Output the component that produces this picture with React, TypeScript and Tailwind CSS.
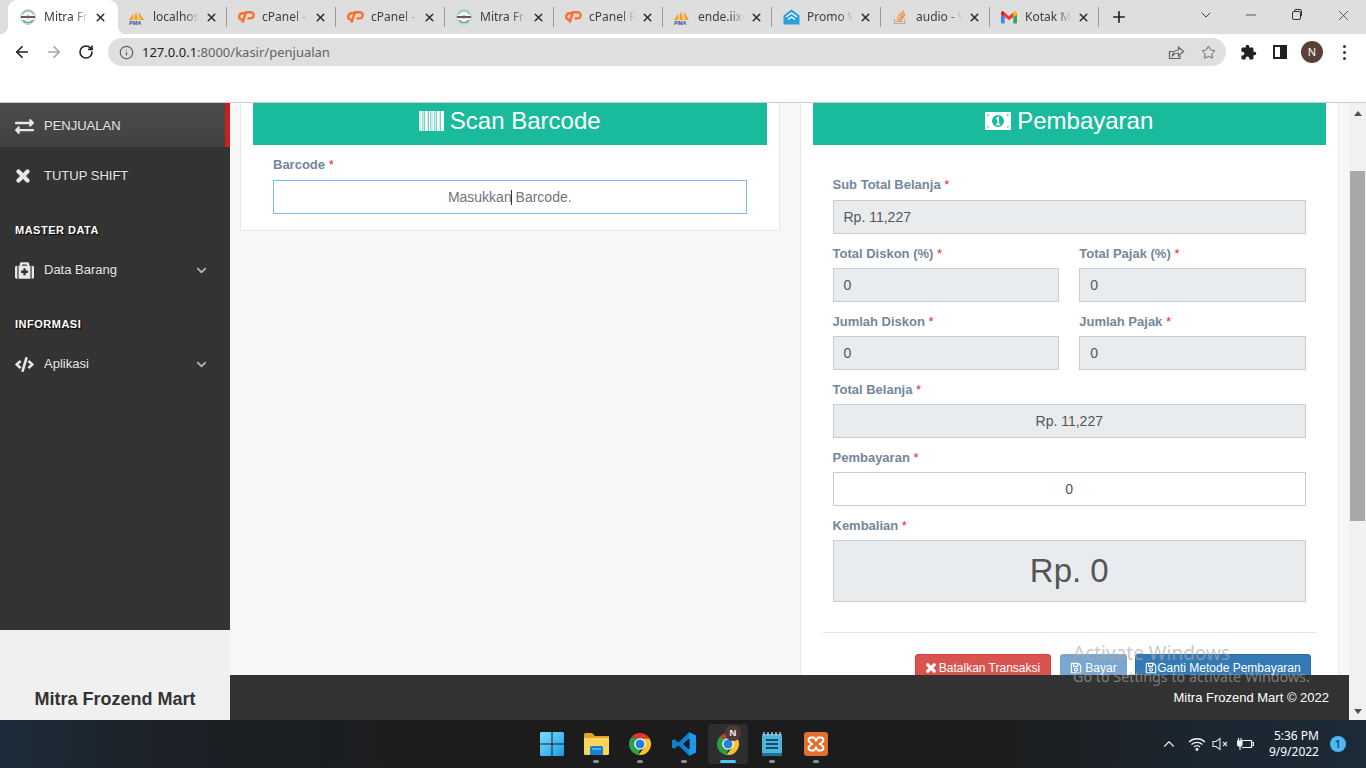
import React from "react";
import { ArrowLeft, ArrowRight, RotateCw, Info, Star, X, Plus, ChevronDown, ChevronUp, Minus } from "lucide-react";
import { FaExchangeAlt, FaMedkit, FaCode, FaChevronDown, FaRegSave } from "react-icons/fa";

const Mitra = () => (
  <svg width="16" height="16" viewBox="0 0 16 16">
    <circle cx="8" cy="8" r="7.5" fill="#f4f7f4" stroke="#b9d3c3" />
    <path d="M2.5 5.5A6 6 0 0 1 13.5 5.5" fill="none" stroke="#7fb9a0" strokeWidth="1.2" />
    <path d="M3 11A6 6 0 0 0 13 11" fill="none" stroke="#5fa98a" strokeWidth="1.4" />
    <rect x="1" y="7" width="14" height="2" fill="#5b5f60" />
    <circle cx="8" cy="8" r="1.4" fill="#b8403d" />
  </svg>
);
const Pma = () => (
  <svg width="18" height="16" viewBox="0 0 18 16">
    <path d="M1 11 5 5l1 6zM6 11l2-9 2 9zM10 11l1-8 5 8z" fill="#f29b2b" />
    <path d="M4 11l2-7 1 7zM9 11l2-7 2 7z" fill="#f6c46c" />
    <text x="1" y="15.5" fontSize="5.5" fontWeight="700" fontStyle="italic" fill="#3d4a86" fontFamily="Liberation Sans, sans-serif">PMA</text>
  </svg>
);
const CP = () => (
  <svg width="17" height="12" viewBox="0 0 17 12">
    <path d="M7 2.200H4.500A3.200 3.200 0 0 0 1.300 5.400 2.600 2.600 0 0 0 3.900 8.600H5.500" fill="none" stroke="#f9702c" strokeWidth="2.400" />
    <path d="M4.500 11.600 7.900 1.300H13A2.700 2.700 0 0 1 15.600 4.500 3.200 3.200 0 0 1 12.400 7.400H9.500" fill="none" stroke="#f9702c" strokeWidth="2.400" />
  </svg>
);
const Promo = () => (
  <svg width="17" height="16" viewBox="0 0 17 16">
    <path d="M8.5 0.5 16.5 6.5V15.5H0.5V6.5Z" fill="#2a9fdc" />
    <path d="M3 8 8.5 4 14 8M5 10.5 8.5 8 12 10.5" fill="none" stroke="#fff" strokeWidth="1.4" />
  </svg>
);
const Stack = () => (
  <svg width="16" height="16" viewBox="0 0 16 16">
    <path d="M2.5 10v4.5h10V10" fill="none" stroke="#b3aea5" strokeWidth="1.2" />
    <path d="M4.5 12.5h6M4.6 10.4l6 .6M5.1 8l5.8 1.6M6.3 5.6l5.2 3M8.3 3.4l3.9 4.4M10.8 1.5l2 5.4" stroke="#f0882d" strokeWidth="1.2" fill="none" />
  </svg>
);
const Gmail = () => (
  <svg width="16" height="13" viewBox="0 0 16 13">
    <path d="M1 12.5h2.7V6L0 3.2v8.2c0 .6.4 1.1 1 1.1z" fill="#4285f4" />
    <path d="M12.3 12.5H15c.6 0 1-.5 1-1.1V3.2L12.3 6z" fill="#34a853" />
    <path d="M12.3 1.6V6L16 3.2V1.8C16 .5 14.500 -.2 13.500 .6z" fill="#fbbc04" />
    <path d="M3.700 6V1.600L8 4.900 12.300 1.600V6L8 9.200z" fill="#ea4335" />
    <path d="M0 1.800v1.400L3.700 6V1.600L2.500 .6C1.500 -.2 0 .5 0 1.800z" fill="#c5221f" />
  </svg>
);
const Cross = ({ s = 14, w = 4.5 }: { s?: number; w?: number }) => (
  <svg width={s} height={s} viewBox="0 0 14 14" className="shrink-0">
    <path d="M2.500 2.500 11.500 11.500M11.500 2.500 2.500 11.500" stroke="currentColor" strokeWidth={w} strokeLinecap="round" />
  </svg>
);

const tabs: { t: string; i: React.ReactNode; w?: number }[] = [
  { t: "localhost", i: <Pma /> },
  { t: "cPanel - Tools", i: <CP /> },
  { t: "cPanel - Tools", i: <CP /> },
  { t: "Mitra Frozend", i: <Mitra /> },
  { t: "cPanel File", i: <CP /> },
  { t: "ende.iixcp", i: <Pma /> },
  { t: "Promo Web", i: <Promo /> },
  { t: "audio - Web", i: <Stack /> },
  { t: "Kotak Masuk", i: <Gmail /> },
];

function Tab({ t, i }: { t: string; i: React.ReactNode }) {
  return (
    <div className="relative flex h-[34px] w-[109px] shrink-0 items-center pl-[10px]">
      <div className="flex w-[18px] shrink-0 justify-center">{i}</div>
      <div className="ml-[7px] w-[46px] overflow-hidden whitespace-nowrap text-[12px] text-[#3c4043] [mask-image:linear-gradient(90deg,#000_70%,transparent)]">{t}</div>
      <X className="ml-[6px] shrink-0 text-[#333]" size={13} strokeWidth={3} />
      <div className="ml-auto mr-0 h-[20px] w-px bg-[#9a9a9a]" />
    </div>
  );
}

function TopBar() {
  return (
    <div className="shrink-0 font-['Noto_Sans',sans-serif]">
      <div className="flex h-[34px] items-center bg-[#dedede] pl-[8px]">
        <div className="relative flex h-[34px] w-[110px] shrink-0 items-center rounded-t-[9px] bg-white pl-[11px]">
          <div className="absolute -left-2 bottom-0 h-2 w-2 bg-[radial-gradient(circle_at_0_0,transparent_8px,white_8px)]" />
          <div className="absolute -right-2 bottom-0 h-2 w-2 bg-[radial-gradient(circle_at_100%_0,transparent_8px,white_8px)]" />
          <div className="flex w-[18px] shrink-0 justify-center"><Mitra /></div>
          <div className="ml-[7px] w-[44px] overflow-hidden whitespace-nowrap text-[12px] text-[#3c4043] [mask-image:linear-gradient(90deg,#000_70%,transparent)]">Mitra Frozend</div>
          <X className="ml-[6px] shrink-0 text-[#333]" size={13} strokeWidth={3} />
        </div>
        {tabs.map((x, k) => <Tab key={k} t={x.t} i={x.i} />)}
        <Plus className="ml-[11px] shrink-0 text-[#202124]" size={18} strokeWidth={2.2} />
        <ChevronDown className="ml-[70px] -mt-[4px] shrink-0 text-[#333]" size={16} strokeWidth={1.4} />
        <Minus className="ml-[29px] -mt-[4px] shrink-0 text-[#333]" size={16} strokeWidth={1.2} />
        <svg className="ml-[30px] -mt-[4px] shrink-0" width="16" height="16" viewBox="0 0 16 16" fill="none" stroke="#333">
          <rect x="3.500" y="4.500" width="8" height="8" rx="1.500" />
          <path d="M5.500 4.500V4a1.500 1.500 0 0 1 1.500-1.500h4A1.500 1.500 0 0 1 12.500 4v4A1.500 1.500 0 0 1 11.500 9.500" />
        </svg>
        <X className="ml-[30px] -mt-[4px] shrink-0 text-[#333]" size={17} strokeWidth={1.1} />
      </div>
      <div className="flex h-[69px] items-start border-b border-[#cccccc] bg-white pt-[4px]">
        <div className="ml-[6px] flex">
          <div className="flex h-[28px] w-8 items-center justify-center"><ArrowLeft size={18} strokeWidth={2.2} className="text-[#202124]" /></div>
          <div className="flex h-[28px] w-8 items-center justify-center"><ArrowRight size={18} strokeWidth={2.2} className="text-[#a5a5a5]" /></div>
          <div className="flex h-[28px] w-8 items-center justify-center"><RotateCw size={16} strokeWidth={2.4} className="text-[#202124]" /></div>
        </div>
        <div className="ml-[6px] flex h-[28px] w-[1118px] items-center rounded-full bg-[#dfdfdf] pl-[11px] pr-[10px]">
          <Info size={15} strokeWidth={2} className="text-[#5f6368]" />
          <div className="ml-[8px] mt-[1px] whitespace-nowrap text-[13px] text-[#5f6368]"><span className="text-[#202124]">127.0.0.1</span>:8000/kasir/penjualan</div>
          <svg className="ml-auto" width="18" height="18" viewBox="0 0 18 18" fill="none" stroke="#5f6368" strokeWidth="1.200">
            <path d="M6 8.500H2.500V15.500H13V13" />
            <path d="M5.500 12.500C6 9 8.500 7 11.500 7V4l5 4.500-5 4.500V10C9 10 7 10.800 5.500 12.500Z" />
          </svg>
          <Star className="ml-[16px]" size={15} strokeWidth={1.600} color="#5f6368" />
        </div>
        <div className="ml-[6px] flex">
          <div className="flex h-[28px] w-8 items-center justify-center">
            <svg width="17" height="17" viewBox="0 0 24 24" fill="#202124">
              <path d="M20.500 11H19V7a2 2 0 0 0-2-2h-4V3.500a2.500 2.500 0 0 0-5 0V5H4a2 2 0 0 0-2 2v3.800h1.500a2.700 2.700 0 0 1 0 5.400H2V20a2 2 0 0 0 2 2h3.800v-1.500a2.700 2.700 0 0 1 5.400 0V22H17a2 2 0 0 0 2-2v-4h1.500a2.500 2.500 0 0 0 0-5z" />
            </svg>
          </div>
          <div className="flex h-[28px] w-8 items-center justify-center">
            <div className="flex h-[14px] w-[14px] justify-end border-2 border-[#202124] bg-white"><div className="h-full w-[5px] bg-[#202124]" /></div>
          </div>
          <div className="flex h-[28px] w-8 items-center justify-center">
            <div className="flex h-[22px] w-[22px] items-center justify-center rounded-full bg-[#5d4037] text-[11px] text-white">N</div>
          </div>
          <div className="flex h-[28px] w-8 flex-col items-center justify-center gap-[3px]">
            <div className="h-[3px] w-[3px] rounded-full bg-[#333]" />
            <div className="h-[3px] w-[3px] rounded-full bg-[#333]" />
            <div className="h-[3px] w-[3px] rounded-full bg-[#333]" />
          </div>
        </div>
      </div>
    </div>
  );
}

function Sidebar() {
  const item = "flex items-center text-[13px] text-[#e7e7e7] [text-shadow:rgba(0,0,0,0.25)_0_-1px_0]";
  const head = "flex items-center pl-[15px] text-[11px] font-bold tracking-[0.5px] text-white [text-shadow:1px_1px_1px_#000]";
  return (
    <div className="flex w-[230px] shrink-0 flex-col">
      <div className="h-[527px] bg-[#333333]">
        <div className={`${item} h-[44px] border-r-[5px] border-[#c9201f] bg-[linear-gradient(#4c4c4c,#414141)] pl-[15px] pt-[2px]`}>
          <FaExchangeAlt size={19} className="w-[19px]" />
          <span className="ml-[10px]">PENJUALAN</span>
        </div>
        <div className={`${item} h-[56px] pl-[15px] pt-[2px]`}>
          <div className="flex w-[15px] justify-center"><Cross s={14} w={4.2} /></div>
          <span className="ml-[14px]">TUTUP SHIFT</span>
        </div>
        <div className={`${head} mt-[12px] h-[30px]`}>MASTER DATA</div>
        <div className={`${item} mt-[5px] h-[40px] pl-[15px] pr-[23px]`}>
          <FaMedkit size={19} className="w-[19px]" />
          <span className="ml-[10px]">Data Barang</span>
          <FaChevronDown size={11} className="ml-auto text-[#b5b5b5]" />
        </div>
        <div className={`${head} mt-[19px] h-[30px]`}>INFORMASI</div>
        <div className={`${item} mt-[6px] h-[38px] pl-[15px] pr-[23px]`}>
          <FaCode size={19} className="w-[19px]" />
          <span className="ml-[10px]">Aplikasi</span>
          <FaChevronDown size={11} className="ml-auto text-[#b5b5b5]" />
        </div>
      </div>
      <div className="flex h-[90px] items-end justify-center bg-[#f0f0f0] pb-[10px] text-[18px] font-bold text-[#333]"><span className="relative top-[3px]">Mitra Frozend Mart</span></div>
    </div>
  );
}

const Req = () => <span className="font-normal text-[#f0233f]"> *</span>;

function Label({ t }: { t: string }) {
  return <div className="pb-[4px] pt-[10px] text-[13px] font-bold leading-5 text-[#73879c]">{t}<Req /></div>;
}

function Field({ v, center, white, big, h = "h-[34px]" }: { v: string; center?: boolean; white?: boolean; big?: boolean; h?: string }) {
  return (
    <div className={`${h} flex items-center border border-[#cccccc] px-[10px] text-[#555555] ${big ? "text-[33px]" : "text-[14px]"} ${center ? "justify-center" : ""} ${white ? "bg-white" : "bg-[#e9ecef]"}`}>{v}</div>
  );
}

const Barcode = () => (
  <svg width="25" height="20" viewBox="0 0 25 20">
    {[0, 2, 4, 6, 8, 10, 12, 14, 16, 18, 20, 22].map((x, k) => (
      <rect key={k} x={x} y="0" width={k % 3 === 0 ? 2 : 1.500} height="20" fill={k % 2 ? "#ffffff" : "#cfeee5"} />
    ))}
    <rect x="23" width="2" height="20" fill="#fff" />
  </svg>
);
const Money = () => (
  <svg width="26" height="20" viewBox="0 0 26 20">
    <path fillRule="evenodd" d="M0 1h26v18H0zM2.500 3.500v1.800a2.500 2.500 0 0 0 1.800-1.800zM21.700 3.500a2.500 2.500 0 0 0 1.800 1.800V3.500zM2.500 14.700v1.800h1.800a2.500 2.500 0 0 0-1.800-1.800zM23.500 14.700a2.500 2.500 0 0 0-1.800 1.800h1.800zM13 4a6 6 0 1 0 0 12 6 6 0 0 0 0-12z" fill="#fff" />
    <path d="M11.200 8l2-1.300V13.500M11 13.500h4.200" stroke="#fff" strokeWidth="1.500" fill="none" />
  </svg>
);

function Main() {
  return (
    <div className="flex min-w-0 flex-1 flex-col">
      <div className="flex h-[572px] gap-5 overflow-hidden bg-[#f7f7f7] px-[10px]">
        <div className="h-[128px] flex-1 border-x border-b border-[#e6e9ed] bg-white px-[12px]">
          <div className="flex h-[42px] items-center justify-center gap-[6px] bg-[#1abb9c] pb-[6px] text-[24px] text-white"><Barcode />Scan Barcode</div>
          <div className="px-[20px]">
            <div className="pb-[5px] pt-[10px] text-[13px] font-bold leading-5 text-[#73879c]">Barcode<Req /></div>
            <div className="relative flex h-[34px] items-center justify-center border border-[#7db8f7] text-[14px] text-[#73737f]">
              Masukkan Barcode.
              <div className="absolute left-[237px] top-[9px] h-[15px] w-px bg-[#333]" />
            </div>
          </div>
        </div>
        <div className="flex-1 border-x border-[#e6e9ed] bg-white px-[12px]">
          <div className="flex h-[42px] items-center justify-center gap-[6px] bg-[#1abb9c] pb-[6px] text-[24px] text-white"><Money />Pembayaran</div>
          <div className="px-[20px] pt-[20px]">
            <div className="pb-[1px]"><Label t="Sub Total Belanja" /></div>
            <Field v="Rp. 11,227" />
            <div className="grid grid-cols-2 gap-x-5">
              <div><Label t="Total Diskon (%)" /><Field v="0" /></div>
              <div><Label t="Total Pajak (%)" /><Field v="0" /></div>
              <div><Label t="Jumlah Diskon" /><Field v="0" /></div>
              <div><Label t="Jumlah Pajak" /><Field v="0" /></div>
            </div>
            <Label t="Total Belanja" />
            <Field v="Rp. 11,227" center />
            <Label t="Pembayaran" />
            <Field v="0" center white />
            <Label t="Kembalian" />
            <Field v="Rp. 0" center big h="h-[62px]" />
          </div>
          <div className="mx-[10px] mt-[30px] border-t border-[#e5e5e5]" />
          <div className="flex justify-end pr-[15px] pt-[21px] text-[12px] text-white">
            <div className="flex h-[27px] w-[136px] items-center justify-center gap-[3px] rounded-t-[3px] border border-[#d43f3a] bg-[#d9534f]"><Cross s={10} w={4.5} />Batalkan Transaksi</div>
            <div className="ml-[9px] flex h-[27px] w-[67px] items-center justify-center gap-[3px] rounded-t-[3px] bg-[#79a7d0]"><FaRegSave size={12} />Bayar</div>
            <div className="ml-[8px] flex h-[27px] w-[176px] items-center justify-center rounded-t-[3px] border border-[#2e6da4] bg-[#337ab7]"><FaRegSave size={12} />Ganti Metode Pembayaran</div>
          </div>
        </div>
      </div>
      <div className="flex h-[45px] items-center justify-end bg-[#333333] pr-[20px] text-[13px] text-white"><span className="mt-[1px]">Mitra Frozend Mart © 2022</span></div>
    </div>
  );
}

function Scrollbar() {
  return (
    <div className="flex w-[17px] shrink-0 flex-col items-center bg-[#f1f1f1]">
      <div className="flex h-[17px] items-center justify-center"><div className="mt-[3px] h-0 w-0 border-x-[4px] border-b-[5px] border-x-transparent border-b-[#505050]" /></div>
      <div className="mt-[51px] h-[350px] w-[15px] bg-[#a8a8a8]" />
      <div className="mt-auto flex h-[17px] items-center justify-center"><div className="h-0 w-0 border-x-[4px] border-t-[5px] border-x-transparent border-t-[#505050]" /></div>
    </div>
  );
}

const Chrome = ({ s = 24 }: { s?: number }) => (
  <svg width={s} height={s} viewBox="0 0 24 24">
    <path d="M12 1A11 11 0 0 1 21.530 6.500H12L3.300 5.300A11 11 0 0 1 12 1Z" fill="#e2352b" />
    <path d="M3.300 5.300 12 6.500 7.200 9.200 12 17.500 10.400 22.900A11 11 0 0 1 3.300 5.300Z" fill="#2f9e47" />
    <path d="M21.530 6.500A11 11 0 0 1 10.400 22.900L16.760 14.750 12 6.500Z" fill="#fbc02d" />
    <circle cx="12" cy="12" r="5.800" fill="#fff" />
    <circle cx="12" cy="12" r="4.500" fill="#2a7de1" />
  </svg>
);

function TaskItem({ children, dot }: { children: React.ReactNode; dot?: boolean }) {
  return (
    <div className="relative flex h-[48px] w-[44px] shrink-0 items-center justify-center">
      <div className="-mt-[1px]">{children}</div>
      {dot && <div className="absolute bottom-[5px] h-[3px] w-[6px] rounded-full bg-[#8f8f8f]" />}
    </div>
  );
}

function Taskbar() {
  return (
    <div className="flex h-[48px] shrink-0 items-center bg-[linear-gradient(90deg,#1d2c3a_0%,#1b2127_12%,#1c1c1c_35%,#1c1c1c_72%,#1b2630_88%,#1c2b38_100%)] pl-[530px] font-['Noto_Sans',sans-serif]">
      <TaskItem>
        <svg width="24" height="24" viewBox="0 0 24 24">
          <defs><linearGradient id="w" x1="0" y1="0" x2="1" y2="1"><stop offset="0" stopColor="#7be0fb" /><stop offset="1" stopColor="#1a9be6" /></linearGradient></defs>
          <path d="M0 1.500A1.500 1.500 0 0 1 1.500 0H11.500V11.500H0ZM12.500 0H22.500A1.500 1.500 0 0 1 24 1.500V11.500H12.500ZM0 12.500H11.500V24H1.500A1.500 1.500 0 0 1 0 22.500ZM12.500 12.500H24V22.500A1.500 1.500 0 0 1 22.500 24H12.500Z" fill="url(#w)" />
        </svg>
      </TaskItem>
      <TaskItem dot>
        <svg width="25" height="22" viewBox="0 0 25 22">
          <path d="M0 1.500A1.500 1.500 0 0 1 1.500 0H8L11 3H25V8H0Z" fill="#e0a526" />
          <path d="M0 5H25V20.500A1.500 1.500 0 0 1 23.500 22H1.500A1.500 1.500 0 0 1 0 20.500Z" fill="#fcd45c" />
          <path d="M6 14.500A1.500 1.500 0 0 1 7.500 13H17.500A1.500 1.500 0 0 1 19 14.500V22H6Z" fill="#1a7fd4" />
          <rect x="8" y="15" width="9" height="2" fill="#4db0ee" />
        </svg>
      </TaskItem>
      <TaskItem dot><Chrome /></TaskItem>
      <TaskItem dot>
        <svg width="24" height="24" viewBox="0 0 24 24">
          <path d="M17.200.300 24 3.500V20.500L17.200 23.700 6.500 13.500 2.200 16.800 0 15.700V8.300L2.200 7.200 6.500 10.500ZM17.500 6.800 11 12 17.500 17.200Z" fill="#0f80cf" fillRule="evenodd" />
          <path d="M17.200.300 24 3.500V20.500L17.200 23.700Z" fill="#1f9cf0" fillOpacity="0.8" />
          <path d="M17.500 6.800 11 12 17.500 17.200Z" fill="#1c1c1c" />
        </svg>
      </TaskItem>
      <div className="relative flex h-[48px] w-[44px] shrink-0 items-center justify-center">
        <div className="absolute left-[2px] top-[4px] h-[40px] w-[40px] rounded-[4px] bg-[#2e2e2e]" />
        <div className="relative -mt-[1px]"><Chrome /></div>
        <div className="absolute left-[19px] top-[5px] flex h-[16px] w-[16px] items-center justify-center rounded-full bg-[#4e3a35] text-[9px] font-bold text-[#eee]">N</div>
        <div className="absolute bottom-[5px] left-[14px] h-[3px] w-[16px] rounded-full bg-[#4cc2ff]" />
      </div>
      <TaskItem dot>
        <svg width="24" height="24" viewBox="0 0 24 24">
          <rect x="2" y="2" width="20" height="22" rx="1.500" fill="#4db4da" />
          <rect x="2" y="21" width="20" height="3" fill="#236f96" />
          <path d="M6 8h12M6 12h12M6 16h12" stroke="#154e6e" strokeWidth="1.800" />
          <path d="M4 0v3.500M8 0v3.500M12 0v3.500M16 0v3.500M20 0v3.500" stroke="#cfeaf4" strokeWidth="1.200" />
        </svg>
      </TaskItem>
      <TaskItem dot>
        <svg width="24" height="24" viewBox="0 0 24 24">
          <rect width="24" height="24" rx="3" fill="#e2702c" />
          <path d="M7 5.500h3l2 3 2-3h3a2.500 2.500 0 0 1 1.500 4.500L16 12l2.500 2a2.500 2.500 0 0 1-1.500 4.500h-3l-2-3-2 3H7A2.500 2.500 0 0 1 5.500 14L8 12 5.500 10A2.500 2.500 0 0 1 7 5.500Z" fill="none" stroke="#fff" strokeWidth="2" />
        </svg>
      </TaskItem>
      <ChevronUp className="ml-[322px] shrink-0 text-[#e8e8e8]" size={18} strokeWidth={1.500} />
      <svg className="ml-[10px] shrink-0" width="18" height="14" viewBox="0 0 18 14" fill="none" stroke="#f0f0f0" strokeWidth="1.300">
        <path d="M1 5a11.500 11.500 0 0 1 16 0M3.500 7.500a8 8 0 0 1 11 0M6 10a4.500 4.500 0 0 1 6 0" />
        <circle cx="9" cy="12.500" r="0.800" fill="#f0f0f0" />
      </svg>
      <svg className="ml-[6px] shrink-0" width="16" height="14" viewBox="0 0 16 14" fill="none" stroke="#e8e8e8" strokeWidth="1.100">
        <path d="M1 4.500H4L8 1.500V12.500L4 9.500H1Z" />
        <path d="M11 5 15 9M15 5 11 9" />
      </svg>
      <svg className="ml-[9px] shrink-0" width="17" height="14" viewBox="0 0 17 14" fill="none" stroke="#f0f0f0" strokeWidth="1.200">
        <path d="M5 3.500H14.500V10.500H5" />
        <path d="M15 5.500H16.500V8.500H15" />
        <path d="M0.500 4H5V7A2 2 0 0 1 0.500 7ZM1.500 1V4M4 1V4M3 9V13" fill="#f0f0f0" />
      </svg>
      <div className="ml-[5px] w-[60px] shrink-0 text-right text-[12px] leading-[16px] text-white">
        <div>5:36 PM</div>
        <div>9/9/2022</div>
      </div>
      <div className="ml-[11px] flex h-[16px] w-[16px] shrink-0 items-center justify-center rounded-full bg-[#4cb7f5] text-[11px] text-[#111]">1</div>
    </div>
  );
}

export default function App() {
  return (
    <div className="relative flex h-[768px] w-[1366px] flex-col overflow-hidden bg-white font-['Liberation_Sans',Arial,sans-serif]">
      <TopBar />
      <div className="flex min-h-0 flex-1">
        <Sidebar />
        <Main />
        <Scrollbar />
      </div>
      <Taskbar />
      <div className="pointer-events-none absolute left-[1073px] top-[640px] whitespace-nowrap font-['Noto_Sans',sans-serif] text-[rgba(170,170,170,0.65)]">
        <div className="text-[19px] leading-[27px]">Activate Windows</div>
        <div className="mt-[1px] text-[14.3px] leading-[18px]">Go to Settings to activate Windows.</div>
      </div>
    </div>
  );
}
